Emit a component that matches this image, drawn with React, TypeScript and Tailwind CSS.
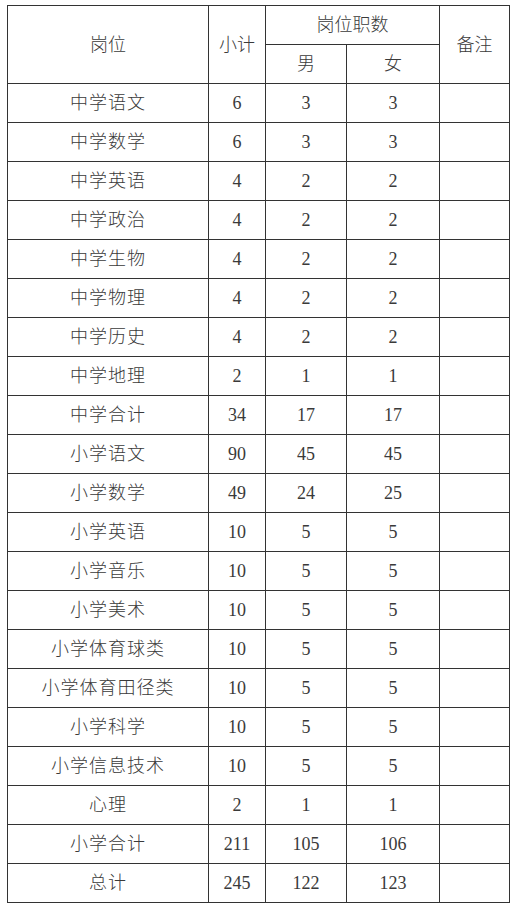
import React from "react";

const rows: [string, string, string, string][] = [
  ["中学语文", "6", "3", "3"],
  ["中学数学", "6", "3", "3"],
  ["中学英语", "4", "2", "2"],
  ["中学政治", "4", "2", "2"],
  ["中学生物", "4", "2", "2"],
  ["中学物理", "4", "2", "2"],
  ["中学历史", "4", "2", "2"],
  ["中学地理", "2", "1", "1"],
  ["中学合计", "34", "17", "17"],
  ["小学语文", "90", "45", "45"],
  ["小学数学", "49", "24", "25"],
  ["小学英语", "10", "5", "5"],
  ["小学音乐", "10", "5", "5"],
  ["小学美术", "10", "5", "5"],
  ["小学体育球类", "10", "5", "5"],
  ["小学体育田径类", "10", "5", "5"],
  ["小学科学", "10", "5", "5"],
  ["小学信息技术", "10", "5", "5"],
  ["心理", "2", "1", "1"],
  ["小学合计", "211", "105", "106"],
  ["总计", "245", "122", "123"],
];

const cell = "border border-[#333] text-center align-middle p-0 font-light";

export default function App() {
  return (
    <div className="bg-white w-[525px] h-[910px] pt-[5px] pl-[7px]">
      <table
        className="border-collapse table-fixed w-[502px] text-[18px] text-[#3a3a3a] leading-none"
        style={{ fontFamily: '"Liberation Serif", "Noto Sans CJK SC", serif' }}
      >
        <colgroup>
          <col className="w-[201px]" />
          <col className="w-[57px]" />
          <col className="w-[81px]" />
          <col className="w-[93px]" />
          <col className="w-[70px]" />
        </colgroup>
        <thead>
          <tr className="h-[39px]">
            <th rowSpan={2} className={cell}>岗位</th>
            <th rowSpan={2} className={cell}>小计</th>
            <th colSpan={2} className={cell}>岗位职数</th>
            <th rowSpan={2} className={cell}>备注</th>
          </tr>
          <tr className="h-[39px]">
            <th className={cell}>男</th>
            <th className={cell}>女</th>
          </tr>
        </thead>
        <tbody>
          {rows.map((r) => (
            <tr key={r[0]} className="h-[39px]">
              <td className={cell + " tracking-[1px]"}>{r[0]}</td>
              <td className={cell}>{r[1]}</td>
              <td className={cell}>{r[2]}</td>
              <td className={cell}>{r[3]}</td>
              <td className={cell}></td>
            </tr>
          ))}
        </tbody>
      </table>
    </div>
  );
}
